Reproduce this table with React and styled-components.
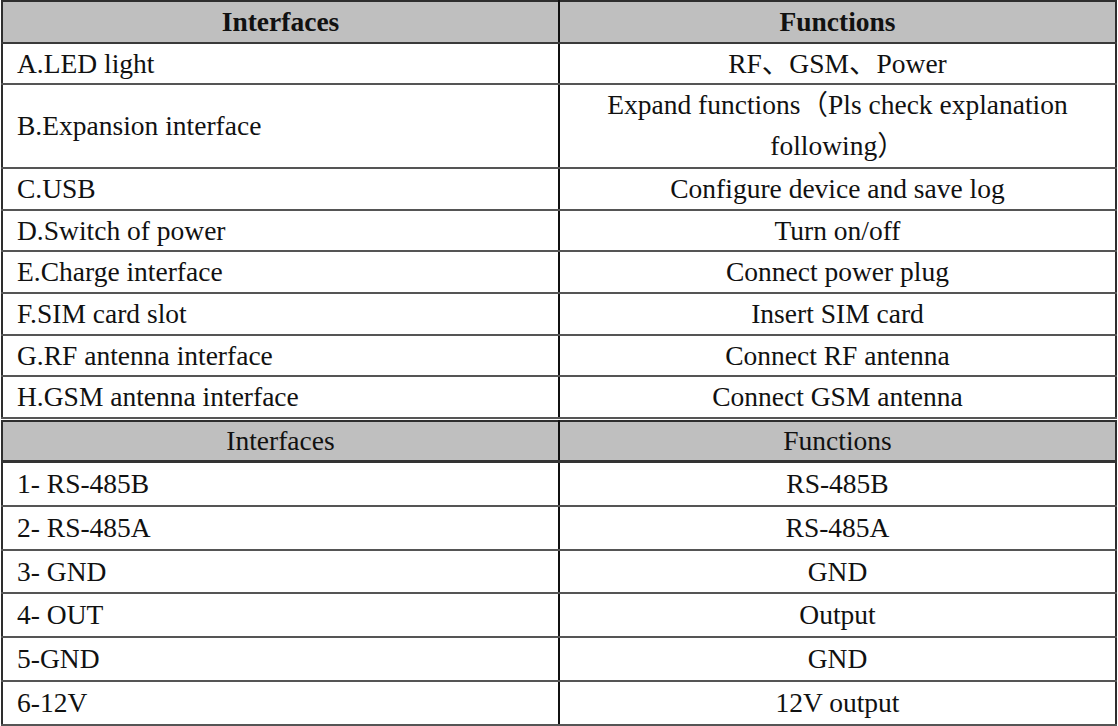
import React from 'react';
import styled, { createGlobalStyle } from 'styled-components';

const serif = '"Liberation Serif", "Times New Roman", "Noto Sans CJK SC", serif';

const GlobalStyle = createGlobalStyle`
  body {
    margin: 0;
    background: #ffffff;
    font-family: ${serif};
  }
`;

const Page = styled.div`
  width: 1118px;
  display: flex;
  flex-direction: column;
  gap: 1px;
`;

const Table = styled.table`
  width: 1116px;
  margin-left: 1px;
  border-collapse: collapse;
  table-layout: fixed;
  border: 2px solid #2e2e2e;
  font-family: ${serif};
  font-size: 27.5px;
  color: #111;
`;

const HeadCell = styled.th`
  padding: 0;
  background: #bfbfbf;
  font-family: ${serif};
  font-size: 27.5px;
  font-weight: ${(p) => (p.$bold ? 700 : 400)};
  text-align: center;
  line-height: ${(p) => p.$lh}px;
  border-right: 2px solid #111;
  border-bottom: ${(p) => (p.$bold ? '2px solid #3a3a3a' : '3px solid #333')};
  &:last-child {
    border-right: none;
  }
`;

const Cell = styled.td`
  padding: 0 ${(p) => (p.$center ? '40px' : '14px')};
  font-family: ${serif};
  font-size: 27.5px;
  text-align: ${(p) => (p.$center ? 'center' : 'left')};
  line-height: ${(p) => p.$lh}px;
  vertical-align: middle;
  border-right: 2px solid #111;
  border-bottom: 2px solid #555;
  &:last-child {
    border-right: none;
  }
`;

// third value: line height for a row that differs from the table default
const mainRows = [
  ['A.LED light', 'RF\u3001GSM\u3001Power'],
  ['B.Expansion interface', 'Expand functions\uFF08Pls check explanation following\uFF09', 40.8],
  ['C.USB', 'Configure device and save log'],
  ['D.Switch of power', 'Turn on/off'],
  ['E.Charge interface', 'Connect power plug'],
  ['F.SIM card slot', 'Insert SIM card'],
  ['G.RF antenna interface', 'Connect RF antenna'],
  ['H.GSM antenna interface', 'Connect GSM antenna'],
];

const pinRows = [
  ['1- RS-485B', 'RS-485B'],
  ['2- RS-485A', 'RS-485A'],
  ['3- GND', 'GND'],
  ['4- OUT', 'Output'],
  ['5-GND', 'GND'],
  ['6-12V', '12V output'],
];

const InterfaceTable = ({ rows, bold, headLh, rowLh }) => (
  <Table>
    <colgroup>
      <col style={{ width: '557px' }} />
      <col />
    </colgroup>
    <thead>
      <tr>
        <HeadCell $bold={bold} $lh={headLh}>Interfaces</HeadCell>
        <HeadCell $bold={bold} $lh={headLh}>Functions</HeadCell>
      </tr>
    </thead>
    <tbody>
      {rows.map(([name, fn, lh]) => (
        <tr key={name}>
          <Cell $lh={lh || rowLh}>{name}</Cell>
          <Cell $lh={lh || rowLh} $center>
            {fn}
          </Cell>
        </tr>
      ))}
    </tbody>
  </Table>
);

export default function App() {
  return (
    <>
      <GlobalStyle />
      <Page>
        <InterfaceTable rows={mainRows} bold headLh={39.5} rowLh={39.7} />
        <InterfaceTable rows={pinRows} headLh={38} rowLh={41.8} />
      </Page>
    </>
  );
}
